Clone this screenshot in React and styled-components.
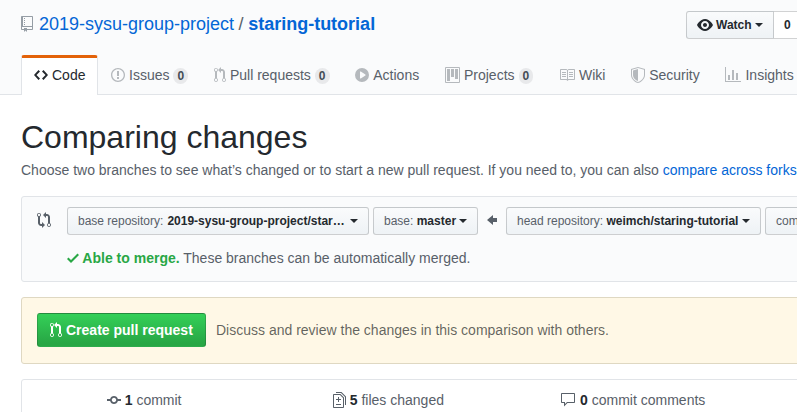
import React from "react";
import styled, { createGlobalStyle, css } from "styled-components";

const GlobalStyle = createGlobalStyle`
  * { box-sizing: border-box; }
  html, body { margin: 0; overflow: hidden; }
  body {
    height: 412px;
    background: #fff;
    color: #24292e;
    font: 14px/21px "Liberation Sans", Arial, sans-serif;
  }
`;

const icons = {
  repo: [12, "M4 9H3V8h1v1zm0-3H3v1h1V6zm0-2H3v1h1V4zm0-2H3v1h1V2zm8-1v12c0 .55-.45 1-1 1H6v2l-1.5-1.5L3 16v-2H1c-.55 0-1-.45-1-1V1c0-.55.45-1 1-1h10c.55 0 1 .45 1 1zm-1 10H1v2h2v-1h3v1h5v-2zm0-10H2v9h9V1z"],
  code: [14, "M9.5 3L8 4.5 11.5 8 8 11.5 9.5 13 14 8 9.5 3zm-5 0L0 8l4.5 5L6 11.5 2.5 8 6 4.5 4.5 3z"],
  issue: [14, "M7 2.3c3.14 0 5.7 2.56 5.7 5.7s-2.56 5.7-5.7 5.7A5.71 5.71 0 0 1 1.3 8c0-3.14 2.56-5.7 5.7-5.7zM7 1C3.14 1 0 4.14 0 8s3.14 7 7 7 7-3.14 7-7-3.14-7-7-7zm1 3H6v5h2V4zm0 6H6v2h2v-2z"],
  pull: [12, "M11 11.28V5c-.03-.78-.34-1.47-.94-2.06C9.46 2.35 8.78 2.03 8 2H7V0L4 3l3 3V4h1c.27.02.48.11.69.31.21.2.3.42.31.69v6.28A1.993 1.993 0 0 0 10 15a1.993 1.993 0 0 0 1-3.72zm-1 2.92c-.66 0-1.2-.55-1.2-1.2 0-.65.55-1.2 1.2-1.2.65 0 1.2.55 1.2 1.2 0 .65-.55 1.2-1.2 1.2zM4 3c0-1.11-.89-2-2-2a1.993 1.993 0 0 0-1 3.72v6.56A1.993 1.993 0 0 0 2 15a1.993 1.993 0 0 0 1-3.72V4.72c.59-.34 1-.98 1-1.72zm-.8 10c0 .66-.55 1.2-1.2 1.2-.65 0-1.2-.55-1.2-1.2 0-.65.55-1.2 1.2-1.2.65 0 1.2.55 1.2 1.2zM2 4.2C1.34 4.2.8 3.65.8 3c0-.65.55-1.2 1.2-1.2.65 0 1.2.55 1.2 1.2 0 .65-.55 1.2-1.2 1.2z"],
  play: [14, "M14 8A7 7 0 1 1 0 8a7 7 0 0 1 14 0zm-8.223 3.482l4.599-3.066a.5.5 0 0 0 0-.832L5.777 4.518A.5.5 0 0 0 5 4.934v6.132a.5.5 0 0 0 .777.416z"],
  project: [15, "M10 12h3V2h-3v10zm-4-2h3V2H6v8zm-4 4h3V2H2v12zm-1 1h13V1H1v14zM14 0H1a1 1 0 0 0-1 1v14a1 1 0 0 0 1 1h13a1 1 0 0 0 1-1V1a1 1 0 0 0-1-1z"],
  book: [16, "M3 5h4v1H3V5zm0 3h4V7H3v1zm0 2h4V9H3v1zm11-5h-4v1h4V5zm0 2h-4v1h4V7zm0 2h-4v1h4V9zm2-6v9c0 .55-.45 1-1 1H9.5l-1 1-1-1H2c-.55 0-1-.45-1-1V3c0-.55.45-1 1-1h5.5l1 1 1-1H15c.55 0 1 .45 1 1zm-8 .5L7.5 3H2v9h6V3.5zm7-.5H9.5l-.5.5V12h6V3z"],
  shield: [14, "M0 2l7-2 7 2v6.02C14 12.69 8.69 16 7 16c-1.69 0-7-3.31-7-7.98V2zm1 .75L7 1l6 1.75v5.268C13 12.104 8.449 15 7 15c-1.449 0-6-2.896-6-6.982V2.75zm1 .75L7 2v12c-1.207 0-5-2.482-5-5.985V3.5z"],
  graph: [16, "M16 14v1H0V0h1v14h15zM5 13H3V8h2v5zm4 0H7V3h2v10zm4 0h-2V6h2v7z"],
  eye: [16, "M8.06 2C3 2 0 8 0 8s3 6 8.06 6C13 14 16 8 16 8s-3-6-7.94-6zM8 12c-2.2 0-4-1.78-4-4 0-2.2 1.8-4 4-4 2.22 0 4 1.8 4 4 0 2.22-1.78 4-4 4zm2-4c0 1.11-.89 2-2 2-1.11 0-2-.89-2-2 0-1.11.89-2 2-2 1.11 0 2 .89 2 2z"],
  compare: [14, "M5 12H4c-.27-.02-.48-.11-.69-.31-.21-.2-.3-.42-.31-.69V4.72A1.993 1.993 0 0 0 2 1a1.993 1.993 0 0 0-1 3.72V11c.03.78.34 1.47.94 2.06.6.59 1.28.91 2.06.94h1v2l3-3-3-3v2zM2 1.8c.66 0 1.2.55 1.2 1.2 0 .65-.55 1.2-1.2 1.2C1.35 4.2.8 3.65.8 3c0-.65.55-1.2 1.2-1.2zm11 9.48V5c-.03-.78-.34-1.47-.94-2.06-.6-.59-1.28-.91-2.06-.94H9V0L6 3l3 3V4h1c.27.02.48.11.69.31.21.2.3.42.31.69v6.28A1.993 1.993 0 0 0 12 15a1.993 1.993 0 0 0 1-3.72zm-1 2.92c-.66 0-1.2-.55-1.2-1.2 0-.65.55-1.2 1.2-1.2.65 0 1.2.55 1.2 1.2 0 .65-.55 1.2-1.2 1.2z"],
  check: [12, "M12 5l-8 8-4-4 1.5-1.5L4 10l6.5-6.5L12 5z"],
  arrow: [10, "M6 3L0 8l6 5v-3h4V6H6V3z"],
  commit: [14, "M10.86 7c-.45-1.72-2-3-3.86-3-1.86 0-3.41 1.28-3.86 3H0v2h3.14c.45 1.72 2 3 3.86 3 1.86 0 3.41-1.28 3.86-3H14V7h-3.14zM7 10.2c-1.22 0-2.2-.98-2.2-2.2 0-1.22.98-2.2 2.2-2.2 1.22 0 2.2.98 2.2 2.2 0 1.22-.98 2.2-2.2 2.2z"],
  diff: [13, "M6 7h2v1H6v2H5V8H3V7h2V5h1v2zm-3 6h5v-1H3v1zM7.5 2L11 5.5V15c0 .55-.45 1-1 1H1c-.55 0-1-.45-1-1V3c0-.55.45-1 1-1h6.5zM10 6L7 3H1v12h9V6zM8.5 0H3v1h5l4 4v8h1V4.5L8.5 0z"],
  comment: [16, "M14 1H2c-.55 0-1 .45-1 1v8c0 .55.45 1 1 1h2v3.5L7.5 11H14c.55 0 1-.45 1-1V2c0-.55-.45-1-1-1zm0 9H7l-2 2v-2H2V2h12v8z"],
};

const IconSvg = styled.svg`
  display: inline-block;
  flex: none;
  fill: currentColor;
  vertical-align: text-bottom;
`;

function Icon({ name, className }) {
  const [w, d] = icons[name];
  return (
    <IconSvg className={className} width={w} height="16" viewBox={`0 0 ${w} 16`} aria-hidden="true">
      <path fillRule="evenodd" d={d} />
    </IconSvg>
  );
}

const Page = styled.div`
  width: 797px;
  height: 412px;
  overflow: hidden;
`;

const Header = styled.header`
  height: 95px;
  padding: 11px 0 0 21px;
  background: #fafbfc;
  border-bottom: 1px solid #e1e4e8;
`;

const TitleRow = styled.div`
  display: flex;
  width: 980px;
  height: 44px;
`;

const Title = styled.h1`
  flex: 0 0 665px;
  display: flex;
  align-items: center;
  height: 26px;
  margin: 0;
  color: #586069;
  font-size: 18px;
  font-weight: 400;
  line-height: 26px;
  white-space: pre;
`;

const RepoIcon = styled(Icon)`
  margin-right: 6px;
  color: #959da5;
`;

const Separator = styled.span`
  margin: 0 4.5px;
`;

const Link = styled.a`
  color: #0366d6;
  text-decoration: none;
  font-weight: ${(p) => (p.$bold ? 600 : 400)};
`;

const Caret = styled.span`
  display: inline-block;
  flex: none;
  border: 4px solid transparent;
  border-top-color: currentColor;
  border-bottom: 0;
  margin-left: ${(p) => (p.$tight ? 3 : 4)}px;
`;

const buttonBase = css`
  display: flex;
  flex: none;
  align-items: center;
  height: 28px;
  padding: 0 10px;
  border: 1px solid rgba(27, 31, 35, 0.2);
  font: 600 12px/20px "Liberation Sans", Arial, sans-serif;
  color: #24292e;
  white-space: pre;
`;

const WatchButton = styled.button`
  ${buttonBase}
  width: 88px;
  background: linear-gradient(-180deg, #fafbfc, #eff3f6 90%);
  border-radius: 3px 0 0 3px;
`;

const WatchIcon = styled(Icon)`
  margin-right: 3px;
`;

const WatchCount = styled.a`
  ${buttonBase}
  background: #fff;
  border-left: 0;
  border-radius: 0 3px 3px 0;
`;

const Tabs = styled.nav`
  display: flex;
  width: 980px;
  height: 40px;
`;

const Tab = styled.a`
  display: flex;
  align-items: center;
  flex: none;
  height: 40px;
  padding: 0 11.75px 3px 12px;
  border: 1px solid transparent;
  border-top: 3px solid transparent;
  border-bottom: 0;
  border-radius: 3px 3px 0 0;
  color: #586069;
  white-space: nowrap;
  ${(p) =>
    p.$active &&
    css`
      width: 77px;
      color: #24292e;
      background: #fff;
      border-color: #e36209 #e1e4e8 transparent;
    `}
`;

const TabIcon = styled(Icon)`
  margin-right: 4px;
  color: ${(p) => (p.$active ? "#24292e" : "#b5b9bd")};
`;

const Counter = styled.span`
  margin: 2px 0 0 4px;
  padding: 2px 4px;
  border-radius: 20px;
  background: rgba(27, 31, 35, 0.08);
  color: #444d56;
  font-size: 12px;
  font-weight: 600;
  line-height: 12px;
`;

const Main = styled.main`
  width: 1001px;
  padding: 22px 0 0 21px;
`;

const Heading = styled.h2`
  margin: 0;
  font-size: 32px;
  font-weight: 400;
  line-height: 40px;
`;

const Lead = styled.p`
  margin: 3px 0 15px;
  color: #586069;
  white-space: nowrap;
`;

const RangeEditor = styled.section`
  display: flex;
  height: 86px;
  padding: 10px 15px;
  background: #fafbfc;
  border: 1px solid #e1e4e8;
  border-radius: 3px;
  color: #586069;
`;

const CompareIcon = styled(Icon)`
  margin: 5px 16px 0 0;
`;

const RangeBody = styled.div`
  display: flex;
  flex-direction: column;
`;

const Selectors = styled.div`
  display: flex;
  align-items: center;
  gap: 4px;
`;

const SelectButton = styled.button`
  ${buttonBase}
  width: ${(p) => p.$w}px;
  background: linear-gradient(-180deg, #fafbfc, #eff3f6 90%);
  border-radius: 3px;
`;

const SelectLabel = styled.span`
  flex: none;
  width: ${(p) => (p.$fixed ? "88.6px" : "auto")};
  color: #586069;
  font-weight: 400;
`;

const SelectValue = styled.span`
  flex: ${(p) => (p.$fixed ? "0 0 179px" : "none")};
`;

const ArrowIcon = styled(Icon)`
  margin: -2px 5px 0;
`;

const MergeStatus = styled.p`
  margin: 13px 0 0;
  white-space: pre;
`;

const Able = styled.strong`
  color: #28a745;
  font-weight: 600;
`;

const CreateBox = styled.section`
  display: flex;
  align-items: flex-start;
  height: 67px;
  margin-top: 15px;
  padding: 15px;
  background: #fff8e6;
  border: 1px solid #dfd8c2;
  border-radius: 3px;
`;

const CreateButton = styled.button`
  display: flex;
  align-items: center;
  width: 169px;
  height: 34px;
  padding: 0 12px;
  border: 1px solid rgba(27, 31, 35, 0.2);
  border-radius: 3px;
  background: linear-gradient(-180deg, #34d058, #28a745 90%);
  color: #fff;
  font: 600 14px/20px "Liberation Sans", Arial, sans-serif;
  white-space: nowrap;
`;

const ButtonIcon = styled(Icon)`
  margin-right: 4px;
`;

const CreateNote = styled.p`
  margin: 7px 0 0 10px;
  color: rgba(27, 31, 35, 0.7);
`;

const Stats = styled.ul`
  display: grid;
  grid-template-columns: repeat(4, 244.3px);
  height: 42px;
  margin: 15px 0 0;
  padding: 10px 0;
  border: 1px solid #e1e4e8;
  border-radius: 3px;
  list-style: none;
`;

const Stat = styled.li`
  text-align: center;
  color: #586069;
`;

const StatNumber = styled.span`
  color: #24292e;
  font-weight: 600;
`;

const tabs = [
  { icon: "code", label: "Code", active: true },
  { icon: "issue", label: "Issues", count: 0 },
  { icon: "pull", label: "Pull requests", count: 0 },
  { icon: "play", label: "Actions" },
  { icon: "project", label: "Projects", count: 0 },
  { icon: "book", label: "Wiki" },
  { icon: "shield", label: "Security" },
  { icon: "graph", label: "Insights" },
];

const stats = [
  { icon: "commit", count: 1, label: "commit" },
  { icon: "diff", count: 5, label: "files changed" },
  { icon: "comment", count: 0, label: "commit comments" },
];

function Selector({ label, value, width, fixed, tight }) {
  return (
    <SelectButton $w={width}>
      <SelectLabel $fixed={fixed}>{label} </SelectLabel>
      <SelectValue $fixed={fixed}>{value}</SelectValue>
      <Caret $tight={tight} />
    </SelectButton>
  );
}

export default function App() {
  return (
    <Page>
      <GlobalStyle />
      <Header>
        <TitleRow>
          <Title>
            <RepoIcon name="repo" />
            <Link>2019-sysu-group-project</Link>
            <Separator>/</Separator>
            <Link $bold>staring-tutorial</Link>
          </Title>
          <WatchButton>
            <WatchIcon name="eye" />
            Watch
            <Caret $tight />
          </WatchButton>
          <WatchCount>0</WatchCount>
        </TitleRow>
        <Tabs>
          {tabs.map((t) => (
            <Tab key={t.label} $active={t.active}>
              <TabIcon name={t.icon} $active={t.active} />
              {t.label}
              {t.count !== undefined && <Counter>{t.count}</Counter>}
            </Tab>
          ))}
        </Tabs>
      </Header>
      <Main>
        <Heading>Comparing changes</Heading>
        <Lead>
          Choose two branches to see what’s changed or to start a new pull request. If you need to, you can also{" "}
          <Link>compare across forks</Link>.
        </Lead>
        <RangeEditor>
          <CompareIcon name="compare" />
          <RangeBody>
            <Selectors>
              <Selector label="base repository:" value="2019-sysu-group-project/star…" width={302} fixed />
              <Selector label="base:" value="master" width={105} tight />
              <ArrowIcon name="arrow" />
              <Selector label="head repository:" value="weimch/staring-tutorial" width={255} />
              <Selector label="compare:" value="master" width={125} />
            </Selectors>
            <MergeStatus>
              <Able>
                <Icon name="check" /> Able to merge.
              </Able>
              {" These branches can be automatically merged."}
            </MergeStatus>
          </RangeBody>
        </RangeEditor>
        <CreateBox>
          <CreateButton>
            <ButtonIcon name="pull" />
            Create pull request
          </CreateButton>
          <CreateNote>Discuss and review the changes in this comparison with others.</CreateNote>
        </CreateBox>
        <Stats>
          {stats.map((s) => (
            <Stat key={s.icon}>
              <Icon name={s.icon} /> <StatNumber>{s.count}</StatNumber> {s.label}
            </Stat>
          ))}
        </Stats>
      </Main>
    </Page>
  );
}
